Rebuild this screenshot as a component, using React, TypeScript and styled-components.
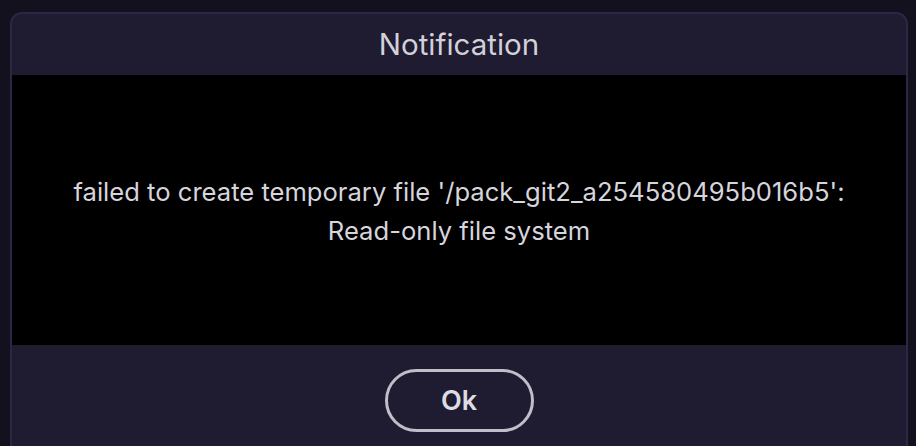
import React from 'react';
import styled, { createGlobalStyle } from 'styled-components';

const GlobalStyle = createGlobalStyle`
  html, body {
    margin: 0;
    padding: 0;
    background: #14111f;
    font-family: Inter, "Noto Sans", sans-serif;
  }
`;

const Page = styled.div`
  width: 916px;
  height: 446px;
  overflow: hidden;
  padding: 12px 8px 0 10px;
  box-sizing: border-box;
`;

const Dialog = styled.div`
  background: #1f1b31;
  border: 2px solid #2b2745;
  border-radius: 12px;
  height: 446px;
  display: flex;
  flex-direction: column;
  box-sizing: border-box;
  overflow: hidden;
`;

const Header = styled.div`
  height: 61px;
  display: flex;
  align-items: center;
  justify-content: center;
  font-size: 29.5px;
  color: #d2d0d8;
  padding-bottom: 2px;
  box-sizing: border-box;
`;

const Body = styled.div`
  height: 270px;
  background: #000;
  display: flex;
  align-items: center;
  justify-content: center;
  text-align: center;
  color: #d6d5dc;
  font-size: 25.6px;
  line-height: 39px;
  padding: 2px 20px 0;
  box-sizing: border-box;
`;

const Footer = styled.div`
  display: flex;
  justify-content: center;
  padding-top: 24px;
`;

const OkButton = styled.button`
  width: 149px;
  height: 63px;
  border-radius: 32px;
  border: 3px solid #c0bec8;
  background: transparent;
  color: #dddce2;
  font-family: Inter, "Noto Sans", sans-serif;
  font-weight: 600;
  font-size: 27px;
  cursor: pointer;
`;

const App = () => {
  return (
    <>
      <GlobalStyle />
      <Page>
        <Dialog>
          <Header>Notification</Header>
          <Body>
            failed to create temporary file '/pack_git2_a254580495b016b5':
            <br />
            Read-only file system
          </Body>
          <Footer>
            <OkButton>Ok</OkButton>
          </Footer>
        </Dialog>
      </Page>
    </>
  );
};

export default App;
